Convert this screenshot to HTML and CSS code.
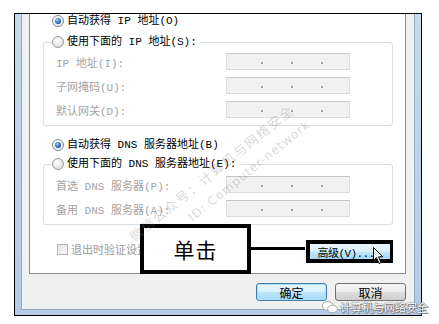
FILE: index.html
```html
<!DOCTYPE html>
<html lang="zh-CN">
<head>
    <meta charset="UTF-8">
    <title>Internet 协议版本 4 (TCP/IPv4) 属性</title>
    <link rel="stylesheet" href="styles.css">
</head>
<body>
    <div class="window">
        <div class="client">
            <div class="page">
                <div class="opt first"><span class="radio on"></span>自动获得 IP 地址(O)</div>
                <fieldset class="group g1">
                    <legend><span class="opt"><span class="radio"></span>使用下面的 IP 地址(S):</span></legend>
                    <div class="field-row first"><span class="lbl">IP 地址(I):</span><span class="ip"><i></i><i></i><i></i></span></div>
                    <div class="field-row"><span class="lbl">子网掩码(U):</span><span class="ip"><i></i><i></i><i></i></span></div>
                    <div class="field-row"><span class="lbl">默认网关(D):</span><span class="ip"><i></i><i></i><i></i></span></div>
                </fieldset>
                <div class="opt dns"><span class="radio on"></span>自动获得 DNS 服务器地址(B)</div>
                <fieldset class="group g2">
                    <legend><span class="opt"><span class="radio"></span>使用下面的 DNS 服务器地址(E):</span></legend>
                    <div class="field-row first"><span class="lbl">首选 DNS 服务器(P):</span><span class="ip"><i></i><i></i><i></i></span></div>
                    <div class="field-row"><span class="lbl">备用 DNS 服务器(A):</span><span class="ip"><i></i><i></i><i></i></span></div>
                </fieldset>
                <div class="bottom-row">
                    <span class="check"><span class="box"></span>退出时验证设置(L)</span>
                    <span class="mark"><span class="btn adv">高级(V)...</span></span>
                </div>
            </div>
            <div class="actions">
                <span class="btn default">确定</span>
                <span class="btn">取消</span>
            </div>
        </div>
    </div>

    <!-- annotation drawn over the screenshot -->
    <div class="callout">单击</div>
    <div class="connector"></div>
    <svg class="cursor" width="12" height="18" viewBox="0 0 12 18">
        <path d="M0.5 0.5 L0.5 13.5 L3.5 10.5 L6 16.5 L8 15.5 L5.5 9.8 L9.8 9.8 Z" fill="#fff" stroke="#000" stroke-width="1"/>
    </svg>

    <div class="wm">
        <div class="wm-line">微信公众号：计算机与网络安全</div>
        <div class="wm-line id">ID: Computer-network</div>
    </div>
    <div class="sig">
        <svg width="16" height="13" viewBox="0 0 16 13">
            <ellipse cx="6" cy="5" rx="5.5" ry="4.5" fill="#fff" stroke="#a8a8a8"/>
            <ellipse cx="10.5" cy="8" rx="4.8" ry="3.8" fill="#fff" stroke="#a8a8a8"/>
        </svg>
        <span>计算机与网络安全</span>
    </div>
</body>
</html>
```

FILE: styles.css
```css
body {
    margin: 0;
    width: 439px;
    height: 324px;
    background: #fff;
    font-family: "Liberation Mono", "Noto Sans CJK SC", monospace;
    font-size: 11px;
    color: #000;
    position: relative;
    overflow: hidden;
}
.window {
    box-sizing: border-box;
    width: 408px;
    margin: 13px 0 0 14px;
    border: 1px solid #000;
    padding: 0 6px 5px 6px;
    background: linear-gradient(#c6d9ee, #b4cbe5);
}
.client {
    background: #f0f0f0;
    border: 1px solid #95a9c2;
    border-top: none;
    padding: 0 8px 0 7px;
}
.page {
    background: #fff;
    border: 1px solid #898c95;
    border-top: none;
    padding: 0 0 10px 0;
}
.opt {
    display: flex;
    align-items: center;
    height: 14px;
    line-height: 14px;
    white-space: nowrap;
}
.page > .opt {
    margin-left: 22px;
}
.opt.dns {
    margin-top: 12px;
}
.radio {
    position: relative;
    box-sizing: border-box;
    width: 12px;
    height: 12px;
    margin-right: 3px;
    border-radius: 50%;
    border: 1px solid #9a9a9a;
    background: radial-gradient(circle at 40% 35%, #ffffff, #d6d6d6);
    flex: none;
}
.radio.on {
    border-color: #7a8a9c;
    background: radial-gradient(circle at 40% 35%, #ffffff, #e4e4e4);
}
.radio.on::after {
    content: "";
    position: absolute;
    left: 2px;
    top: 2px;
    width: 6px;
    height: 6px;
    border-radius: 50%;
    background: radial-gradient(circle at 40% 35%, #a9d4ff, #2a68b0 55%, #153a6a);
}
.group {
    margin: 7px 12px 0 13px;
    padding: 0 0 7px 0;
    border: 1px solid #d5dfe5;
    border-radius: 3px;
    min-width: 0;
}
.g2 {
    margin-top: 5px;
}
.group legend {
    margin-left: 8px;
    padding: 0 3px 0 0;
}
.field-row {
    display: flex;
    align-items: center;
    height: 17px;
    margin-top: 7px;
    padding-left: 12px;
    color: #a3a3a3;
}
.g1 .field-row.first {
    margin-top: 4px;
}
.g2 .field-row.first {
    margin-top: 5px;
}
.lbl {
    width: 170px;
    white-space: nowrap;
}
.ip {
    box-sizing: border-box;
    display: flex;
    align-items: flex-end;
    width: 124px;
    height: 17px;
    padding: 0 0 5px 34px;
    gap: 28px;
    background: #f2f2f2;
    border: 1px solid #dcdcdc;
    border-top-color: #c4c4c4;
}
.ip i {
    width: 2px;
    height: 2px;
    background: #a0a0a0;
}
.bottom-row {
    display: flex;
    justify-content: space-between;
    align-items: flex-start;
    height: 23px;
    margin-top: 15px;
}
.check {
    display: flex;
    align-items: center;
    height: 14px;
    margin: 2px 0 0 27px;
    color: #9a9a9a;
    white-space: nowrap;
}
.check .box {
    box-sizing: border-box;
    width: 11px;
    height: 11px;
    margin-right: 3px;
    border: 1px solid #b5b5b5;
    background: linear-gradient(135deg, #e2e2e2, #fafafa);
}
.mark {
    margin-right: 12px;
    border: 4px solid #000;
    border-right-width: 3px;
    background: #000;
}
.btn {
    box-sizing: border-box;
    display: flex;
    align-items: center;
    justify-content: center;
    width: 71px;
    height: 18px;
    border: 1px solid #707070;
    border-radius: 3px;
    background: linear-gradient(#f6f6f6 0%, #ebebeb 50%, #dddddd 51%, #cfcfcf 100%);
    font-family: "Noto Sans CJK SC", sans-serif;
    font-size: 12px;
    color: #000;
}
.btn.adv {
    width: 80px;
    height: 15px;
    border: none;
    border-radius: 0;
    background: linear-gradient(#eaf6fd 0%, #d9f0fc 50%, #bee6fd 51%, #a7d9f5 100%);
    font-family: "Liberation Mono", "Noto Sans CJK SC", monospace;
    font-size: 11px;
    letter-spacing: -0.6px;
    padding-right: 8px;
}
.btn.default {
    border-color: #3c7fb1;
    background: linear-gradient(#eaf6fd 0%, #d9f0fc 50%, #bee6fd 51%, #a7d9f5 100%);
    box-shadow: inset 0 0 0 1px #aee1f7;
}
.actions {
    display: flex;
    justify-content: flex-end;
    gap: 8px;
    padding: 9px 0 8px 0;
}
.callout {
    position: absolute;
    left: 140px;
    top: 224px;
    box-sizing: border-box;
    width: 111px;
    height: 50px;
    border: 4px solid #000;
    background: #fff;
    display: flex;
    align-items: center;
    justify-content: center;
    font-family: "Noto Sans CJK SC", sans-serif;
    font-size: 21px;
    letter-spacing: 1px;
}
.connector {
    position: absolute;
    left: 250px;
    top: 247px;
    width: 55px;
    height: 3px;
    background: #000;
}
.cursor {
    position: absolute;
    left: 373px;
    top: 247px;
}
.wm {
    position: absolute;
    left: 126px;
    top: 232px;
    transform: rotate(-39deg);
    transform-origin: 0 0;
    color: rgba(120, 120, 120, 0.3);
    pointer-events: none;
}
.wm-line {
    font-family: "Noto Sans CJK SC", sans-serif;
    font-size: 13px;
    letter-spacing: 1.8px;
    white-space: nowrap;
    line-height: 16px;
}
.wm-line.id {
    margin-left: 58px;
    margin-top: 6px;
    font-family: "DejaVu Sans", sans-serif;
    font-size: 12px;
    letter-spacing: 1px;
}
.sig {
    position: absolute;
    left: 322px;
    top: 299px;
    display: flex;
    align-items: center;
    gap: 2px;
    font-family: "Noto Sans CJK SC", sans-serif;
    font-size: 11px;
    color: #fff;
    text-shadow: 0 0 1px #555, 0 0 1px #555, 1px 1px 0 #888;
}
```
